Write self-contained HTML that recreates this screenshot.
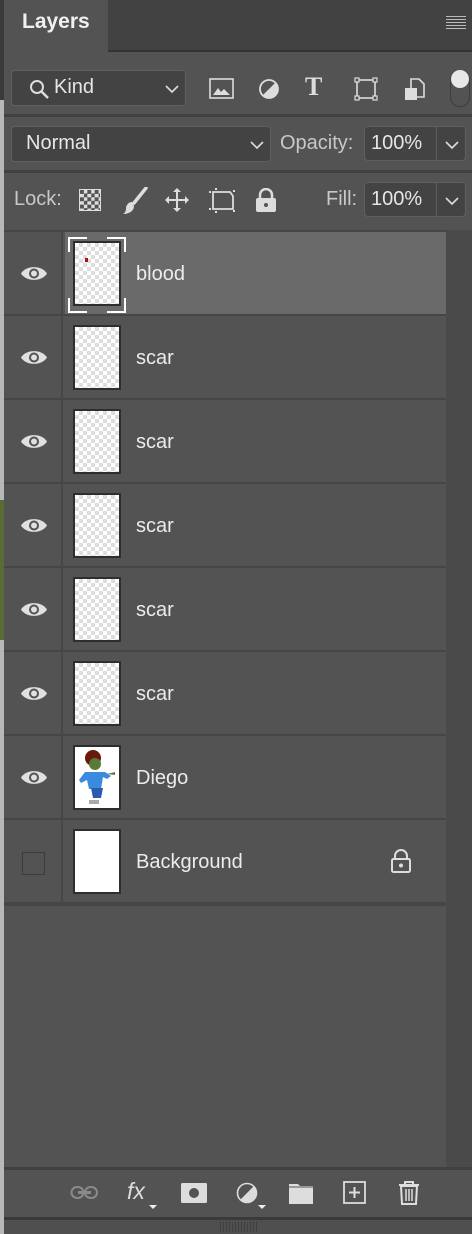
<!DOCTYPE html>
<html><head><meta charset="utf-8"><style>
*{margin:0;padding:0;box-sizing:border-box}
body{width:472px;height:1234px;background:#4f4f4f;position:relative;overflow:hidden;font-family:"Liberation Sans",sans-serif;color:#e6e6e6}
.a{position:absolute}
.leftedge{left:0;top:0;width:4px;height:1234px;background:#b8b8b8}
.box{background:#434343;border:1px solid #5f5f5f;border-radius:4px}
.row{position:absolute;left:4px;width:442px;height:82px;background:#535353}
.eyec{position:absolute;left:0;top:0;width:59px;height:82px;border-right:2px solid #474747}
.thumb{position:absolute;left:69px;top:9px;width:48px;height:65px;border:2px solid #2e2e2e;background-color:#fff;background-image:linear-gradient(45deg,#ddd 25%,transparent 25%,transparent 75%,#ddd 75%),linear-gradient(45deg,#ddd 25%,transparent 25%,transparent 75%,#ddd 75%);background-size:8px 8px;background-position:0 0,4px 4px}
.name{position:absolute;left:132px;top:31px;font-size:20px;color:#ececec}
svg{display:block}
</style></head><body>
<div class="a leftedge"></div>
<div class="a" style="left:0;top:0;width:4px;height:100px;background:#3a3a3a"></div>
<div class="a" style="left:0;top:500px;width:4px;height:140px;background:#5a6b33"></div>
<div class="a" style="left:4px;top:0;width:468px;height:52px;background:#424242"></div>
<div class="a" style="left:4px;top:0;width:104px;height:52px;background:#535353"></div>
<div class="a" style="left:108px;top:50px;width:364px;height:2px;background:#333"></div>
<div class="a" style="left:22px;top:10px;font-size:21px;font-weight:bold;color:#f0f0f0">Layers</div>
<div class="a" style="left:446px;top:16px;width:20px;height:14px;background:repeating-linear-gradient(#bbb 0 1px,transparent 1px 3px)"></div>
<div class="a" style="left:4px;top:52px;width:468px;height:1166px;background:#535353"></div>
<!-- kind row -->
<div class="a box" style="left:11px;top:70px;width:175px;height:36px"></div>
<svg class="a" style="left:29px;top:79px" width="22" height="22" viewBox="0 0 22 22"><circle cx="8" cy="8" r="6" fill="none" stroke="#ddd" stroke-width="2"/><path d="M12.5 12.5L19 19" stroke="#ddd" stroke-width="2.5"/></svg>
<div class="a" style="left:54px;top:76px;font-size:20px">Kind</div>
<svg class="a" style="left:165px;top:85px" width="14" height="9"><path d="M1 1l6 6 6-6" stroke="#ddd" stroke-width="1.6" fill="none"/></svg>
<svg class="a" style="left:209px;top:78px" width="26" height="22"><rect x="1" y="1" width="23" height="19" fill="none" stroke="#ddd" stroke-width="1.6"/><path d="M4 17l5-7 3 4 3-3 6 6z" fill="#ddd"/></svg>
<svg class="a" style="left:258px;top:78px" width="24" height="22"><circle cx="11" cy="11" r="9" fill="none" stroke="#ddd" stroke-width="1.8"/><path d="M17.4 4.6A9 9 0 0 1 4.6 17.4z" fill="#ddd"/></svg>
<div class="a" style="left:305px;top:72px;font-size:26px;font-family:'Liberation Serif',serif;font-weight:bold;color:#ddd">T</div>
<svg class="a" style="left:354px;top:77px" width="24" height="24"><rect x="3" y="3" width="18" height="18" fill="none" stroke="#ddd" stroke-width="1.6"/><g fill="#535353" stroke="#ddd" stroke-width="1.2"><rect x="1" y="1" width="4" height="4"/><rect x="19" y="1" width="4" height="4"/><rect x="1" y="19" width="4" height="4"/><rect x="19" y="19" width="4" height="4"/></g></svg>
<svg class="a" style="left:403px;top:77px" width="22" height="24"><path d="M8 2h8l5 5v13H8z" fill="none" stroke="#ddd" stroke-width="1.6"/><rect x="2" y="11" width="12" height="12" fill="#ddd"/></svg>
<div class="a" style="left:450px;top:70px;width:20px;height:37px;border:1.5px solid #3d3d3d;border-radius:10px"></div>
<div class="a" style="left:451px;top:70px;width:18px;height:18px;border-radius:9px;background:#e8e8e8"></div>
<div class="a" style="left:4px;top:114px;width:468px;height:3px;background:#404040"></div>
<!-- blend -->
<div class="a box" style="left:11px;top:126px;width:260px;height:36px"></div>
<div class="a" style="left:26px;top:132px;font-size:20px">Normal</div>
<svg class="a" style="left:250px;top:141px" width="14" height="9"><path d="M1 1l6 6 6-6" stroke="#ddd" stroke-width="1.6" fill="none"/></svg>
<div class="a" style="left:280px;top:132px;font-size:20px;color:#c8c8c8">Opacity:</div>
<div class="a box" style="left:364px;top:126px;width:102px;height:35px"></div>
<div class="a" style="left:436px;top:127px;width:1px;height:33px;background:#5f5f5f"></div>
<div class="a" style="left:371px;top:132px;font-size:20px">100%</div>
<svg class="a" style="left:445px;top:141px" width="14" height="9"><path d="M1 1l6 6 6-6" stroke="#ddd" stroke-width="1.6" fill="none"/></svg>
<div class="a" style="left:4px;top:170px;width:468px;height:3px;background:#404040"></div>
<!-- lock -->
<div class="a" style="left:14px;top:188px;font-size:20px;color:#c8c8c8">Lock:</div>
<div class="a" style="left:79px;top:189px;width:22px;height:22px;background:conic-gradient(#ddd 25%,#555 0 50%,#ddd 0 75%,#555 0);background-size:7.33px 7.33px;border:1px solid #ddd"></div>
<svg class="a" style="left:122px;top:187px" width="26" height="28"><path d="M24 1L12 16" stroke="#ddd" stroke-width="3.5" stroke-linecap="round"/><path d="M10 15c-4 0-6 4-6 6 0 3-1 5-3 6 6 0 11-3 11-8z" fill="#ddd"/></svg>
<svg class="a" style="left:164px;top:187px" width="26" height="26"><path d="M13 2v22M2 13h22" stroke="#ddd" stroke-width="2"/><path d="M13 1l-4 4h8zM13 25l-4-4h8zM1 13l4-4v8zM25 13l-4-4v8z" fill="#ddd"/></svg>
<svg class="a" style="left:207px;top:187px" width="30" height="26"><path d="M6 5h17l3 4v13H6z" fill="none" stroke="#ddd" stroke-width="1.8"/><g fill="#ddd"><rect x="2" y="4" width="2" height="2"/><rect x="26" y="3" width="2" height="2"/><rect x="2" y="21" width="2" height="2"/><rect x="26" y="23" width="2" height="2"/><rect x="8" y="1" width="2" height="2"/><rect x="8" y="24" width="2" height="2"/></g></svg>
<svg class="a" style="left:255px;top:188px" width="22" height="24"><path d="M5 11V7a6 6 0 0 1 12 0v4" fill="none" stroke="#ddd" stroke-width="2.5"/><rect x="1" y="10" width="20" height="14" rx="2" fill="#ddd"/><circle cx="11" cy="17" r="2" fill="#535353"/></svg>
<div class="a" style="left:326px;top:188px;font-size:20px;color:#c8c8c8">Fill:</div>
<div class="a box" style="left:364px;top:182px;width:102px;height:35px"></div>
<div class="a" style="left:436px;top:183px;width:1px;height:33px;background:#5f5f5f"></div>
<div class="a" style="left:371px;top:188px;font-size:20px">100%</div>
<svg class="a" style="left:445px;top:197px" width="14" height="9"><path d="M1 1l6 6 6-6" stroke="#ddd" stroke-width="1.6" fill="none"/></svg>
<!-- list -->
<div class="a" style="left:4px;top:230px;width:442px;height:676px;background:#464646"></div>
<div class="a" style="left:446px;top:230px;width:26px;height:940px;background:#4a4a4a"></div>

<div class="row" style="top:232px"><div class="eyec"></div><div style="position:absolute;left:61px;top:0;width:381px;height:82px;background:#6a6a6a"></div><div class="thumb"></div>
<div class="a" style="left:81px;top:26px;width:3px;height:4px;background:#a11"></div>
<svg class="a" style="left:64px;top:5px" width="58" height="76"><path d="M1 15V1h18M39 1h18v14M1 61v14h18M39 75h18V61" stroke="#fff" stroke-width="2" fill="none"/></svg>
<div class="name">blood</div></div>
<div class="row" style="top:316px"><div class="eyec"></div><div class="thumb"></div><div class="name">scar</div></div>
<div class="row" style="top:400px"><div class="eyec"></div><div class="thumb"></div><div class="name">scar</div></div>
<div class="row" style="top:484px"><div class="eyec"></div><div class="thumb"></div><div class="name">scar</div></div>
<div class="row" style="top:568px"><div class="eyec"></div><div class="thumb"></div><div class="name">scar</div></div>
<div class="row" style="top:652px"><div class="eyec"></div><div class="thumb"></div><div class="name">scar</div></div>
<div class="row" style="top:736px"><div class="eyec"></div><div class="thumb" style="background:#fff"></div>
<svg class="a" style="left:71px;top:12px" width="44" height="60"><circle cx="18" cy="10" r="8" fill="#6a1a0a"/><circle cx="20" cy="16" r="6" fill="#5a7a3a"/><path d="M10 24h20l6 4-4 3-4-2-2 12h-12l-2-9-6 3-2-3z" fill="#3a8ae0"/><path d="M16 40h12l-2 10h-8z" fill="#2a5ab0"/><path d="M14 52h10v4h-10z" fill="#aaa"/><path d="M32 26l8-2v3z" fill="#5a7a3a"/></svg>
<div class="name">Diego</div></div>
<div class="row" style="top:820px"><div class="eyec"></div><div class="a" style="left:18px;top:32px;width:23px;height:23px;border:1.5px solid #3c3c3c"></div><div class="thumb" style="background:#fff"></div><div class="name">Background</div>
<svg class="a" style="left:386px;top:29px" width="22" height="24"><path d="M5 10V7a6 6 0 0 1 12 0v3" fill="none" stroke="#ddd" stroke-width="2"/><rect x="2" y="10" width="18" height="13" rx="1.5" fill="none" stroke="#ddd" stroke-width="2"/><circle cx="11" cy="16.5" r="2" fill="#ddd"/></svg></div>

<svg width="0" height="0" style="position:absolute"><defs><g id="eye"><path d="M0 8.5C5 0 21 0 26 8.5C21 17 5 17 0 8.5z" fill="#e0e0e0"/><circle cx="13" cy="8.5" r="5" fill="#535353"/><circle cx="13" cy="8.5" r="3" fill="#e0e0e0"/></g></defs></svg>
<svg class="a" style="left:21px;top:265px" width="26" height="17"><use href="#eye"/></svg>
<svg class="a" style="left:21px;top:349px" width="26" height="17"><use href="#eye"/></svg>
<svg class="a" style="left:21px;top:433px" width="26" height="17"><use href="#eye"/></svg>
<svg class="a" style="left:21px;top:517px" width="26" height="17"><use href="#eye"/></svg>
<svg class="a" style="left:21px;top:601px" width="26" height="17"><use href="#eye"/></svg>
<svg class="a" style="left:21px;top:685px" width="26" height="17"><use href="#eye"/></svg>
<svg class="a" style="left:21px;top:769px" width="26" height="17"><use href="#eye"/></svg>

<div class="a" style="left:4px;top:906px;width:442px;height:262px;background:#535353"></div>
<!-- bottom bar -->
<div class="a" style="left:4px;top:1167px;width:468px;height:3px;background:#404040"></div>
<div class="a" style="left:4px;top:1170px;width:468px;height:48px;background:#535353"></div>
<svg class="a" style="left:70px;top:1185px" width="30" height="16"><rect x="1.5" y="2" width="12" height="11" rx="5.5" fill="none" stroke="#8a8a8a" stroke-width="2"/><rect x="15" y="2" width="12" height="11" rx="5.5" fill="none" stroke="#8a8a8a" stroke-width="2"/><path d="M8 7.5h13" stroke="#8a8a8a" stroke-width="3"/></svg>
<div class="a" style="left:127px;top:1178px;font-size:23px;font-style:italic;color:#ddd;font-family:'Liberation Sans',sans-serif">fx</div>
<svg class="a" style="left:149px;top:1205px" width="9" height="6"><path d="M0 0h8l-4 4z" fill="#eee"/></svg>
<svg class="a" style="left:181px;top:1183px" width="26" height="20"><rect width="26" height="20" rx="1.5" fill="#ddd"/><circle cx="13" cy="10" r="5" fill="#535353"/></svg>
<svg class="a" style="left:236px;top:1182px" width="22" height="22"><circle cx="11" cy="11" r="9.5" fill="none" stroke="#ddd" stroke-width="1.6"/><path d="M17.7 4.3A9.5 9.5 0 0 1 4.3 17.7z" fill="#ddd"/></svg>
<svg class="a" style="left:258px;top:1205px" width="9" height="6"><path d="M0 0h8l-4 4z" fill="#eee"/></svg>
<svg class="a" style="left:288px;top:1182px" width="26" height="22"><path d="M1 2h9l2 2h13v18H1z" fill="#ddd"/><path d="M1 5h24" stroke="#535353" stroke-width="1"/></svg>
<svg class="a" style="left:343px;top:1181px" width="24" height="24"><rect x="1" y="1" width="21" height="21" fill="none" stroke="#ddd" stroke-width="1.8"/><path d="M11.5 6v11M6 11.5h11" stroke="#ddd" stroke-width="2"/></svg>
<svg class="a" style="left:398px;top:1180px" width="22" height="26"><path d="M1 5h20M7 5V2h8v3" fill="none" stroke="#ddd" stroke-width="2"/><path d="M3 6h16l-1 18H4z" fill="none" stroke="#ddd" stroke-width="2"/><path d="M8 9v12M11 9v12M14 9v12" stroke="#ddd" stroke-width="1.5"/></svg>
<div class="a" style="left:4px;top:1217px;width:468px;height:3px;background:#3a3a3a"></div>
<div class="a" style="left:4px;top:1220px;width:468px;height:14px;background:#4f4f4f"></div>
<div class="a" style="left:220px;top:1222px;width:38px;height:10px;background:repeating-linear-gradient(90deg,#3f3f3f 0 1px,transparent 1px 3px)"></div>
</body></html>
